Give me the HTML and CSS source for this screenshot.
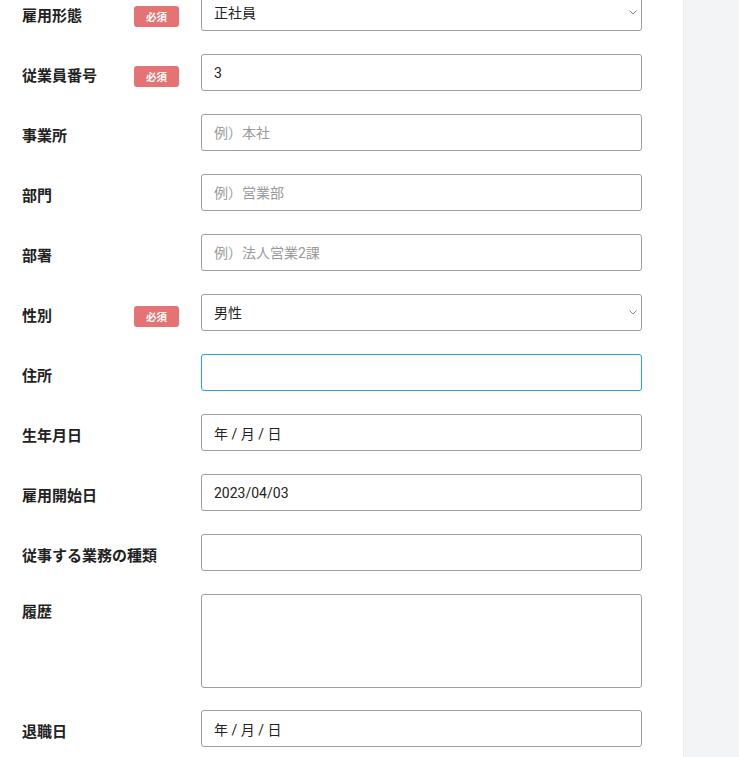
FILE: index.html
```html
<!DOCTYPE html>
<html lang="ja">
<head>
<meta charset="utf-8">
<title>従業員情報</title>
<link rel="stylesheet" href="styles.css">
</head>
<body>
<div class="layout">
  <main class="main">
    <form class="form">
      <div class="row">
        <div class="label"><span class="label-text">雇用形態</span><span class="badge">必須</span></div>
        <div class="field select-wrap">
          <div class="control select">正社員</div>
          <svg class="chevron" width="8" height="5" viewBox="0 0 8 5"><path d="M0.5 0.5 L4 4 L7.5 0.5" fill="none" stroke="#8a8a8a" stroke-width="1"/></svg>
        </div>
      </div>
      <div class="row">
        <div class="label"><span class="label-text">従業員番号</span><span class="badge">必須</span></div>
        <div class="field"><input class="control" type="text" value="3"></div>
      </div>
      <div class="row">
        <div class="label"><span class="label-text">事業所</span></div>
        <div class="field"><input class="control" type="text" placeholder="例）本社"></div>
      </div>
      <div class="row">
        <div class="label"><span class="label-text">部門</span></div>
        <div class="field"><input class="control" type="text" placeholder="例）営業部"></div>
      </div>
      <div class="row">
        <div class="label"><span class="label-text">部署</span></div>
        <div class="field"><input class="control" type="text" placeholder="例）法人営業2課"></div>
      </div>
      <div class="row">
        <div class="label"><span class="label-text">性別</span><span class="badge">必須</span></div>
        <div class="field select-wrap">
          <div class="control select">男性</div>
          <svg class="chevron" width="8" height="5" viewBox="0 0 8 5"><path d="M0.5 0.5 L4 4 L7.5 0.5" fill="none" stroke="#8a8a8a" stroke-width="1"/></svg>
        </div>
      </div>
      <div class="row">
        <div class="label"><span class="label-text">住所</span></div>
        <div class="field"><input class="control focused" type="text"></div>
      </div>
      <div class="row">
        <div class="label"><span class="label-text">生年月日</span></div>
        <div class="field"><input class="control" type="text" value="年 / 月 / 日"></div>
      </div>
      <div class="row">
        <div class="label"><span class="label-text">雇用開始日</span></div>
        <div class="field"><input class="control" type="text" value="2023/04/03"></div>
      </div>
      <div class="row">
        <div class="label"><span class="label-text">従事する業務の種類</span></div>
        <div class="field"><input class="control" type="text"></div>
      </div>
      <div class="row row-area">
        <div class="label label-top"><span class="label-text">履歴</span></div>
        <div class="field"><textarea class="control area"></textarea></div>
      </div>
      <div class="row">
        <div class="label"><span class="label-text">退職日</span></div>
        <div class="field"><input class="control" type="text" value="年 / 月 / 日"></div>
      </div>
    </form>
  </main>
  <aside class="side"></aside>
</div>
</body>
</html>
```

FILE: styles.css
```css
* { box-sizing: border-box; }
html, body {
  margin: 0;
  padding: 0;
  background: #ffffff;
  font-family: Roboto, "Noto Sans CJK JP", sans-serif;
  color: #222222;
}
.layout {
  display: flex;
  height: 757px;
  overflow: hidden;
}
.main {
  width: 683px;
  flex: none;
}
.side {
  flex: 1;
  background: #f3f4f6;
  border-left: 1px solid #eceef1;
}
.form {
  margin-top: -6px;
  padding-left: 22px;
  display: flex;
  flex-direction: column;
  gap: 23px;
}
.row {
  display: flex;
  align-items: flex-start;
}
.row-area {
  margin-bottom: -1px;
}
.label {
  width: 157px;
  margin-right: 22px;
  flex: none;
  height: 37px;
  display: flex;
  align-items: center;
  justify-content: space-between;
  padding-top: 7px;
}
.label-top {
  height: auto;
  padding-top: 8px;
}
.label-text {
  font-size: 15px;
  font-weight: 700;
  line-height: 20px;
  color: #222222;
}
.badge {
  width: 45px;
  height: 21px;
  border-radius: 3px;
  background: #e57373;
  color: #ffffff;
  font-size: 10.5px;
  font-weight: 700;
  display: flex;
  align-items: center;
  justify-content: center;
}
.field {
  width: 441px;
  position: relative;
}
.control {
  display: block;
  width: 441px;
  height: 37px;
  margin: 0;
  border: 1px solid #9e9e9e;
  border-radius: 3px;
  padding: 0 12px;
  font-family: Roboto, "Noto Sans CJK JP", sans-serif;
  font-size: 14px;
  color: #222222;
  background: #ffffff;
  outline: none;
}
.control::placeholder {
  color: #9a9a9a;
}
.select {
  display: flex;
  align-items: center;
  padding-bottom: 2px;
}
.chevron {
  position: absolute;
  right: 5px;
  top: 16px;
}
.focused {
  border-color: #1fa9d2;
}
.area {
  height: 94px;
  resize: none;
  padding: 8px 12px;
}
```
